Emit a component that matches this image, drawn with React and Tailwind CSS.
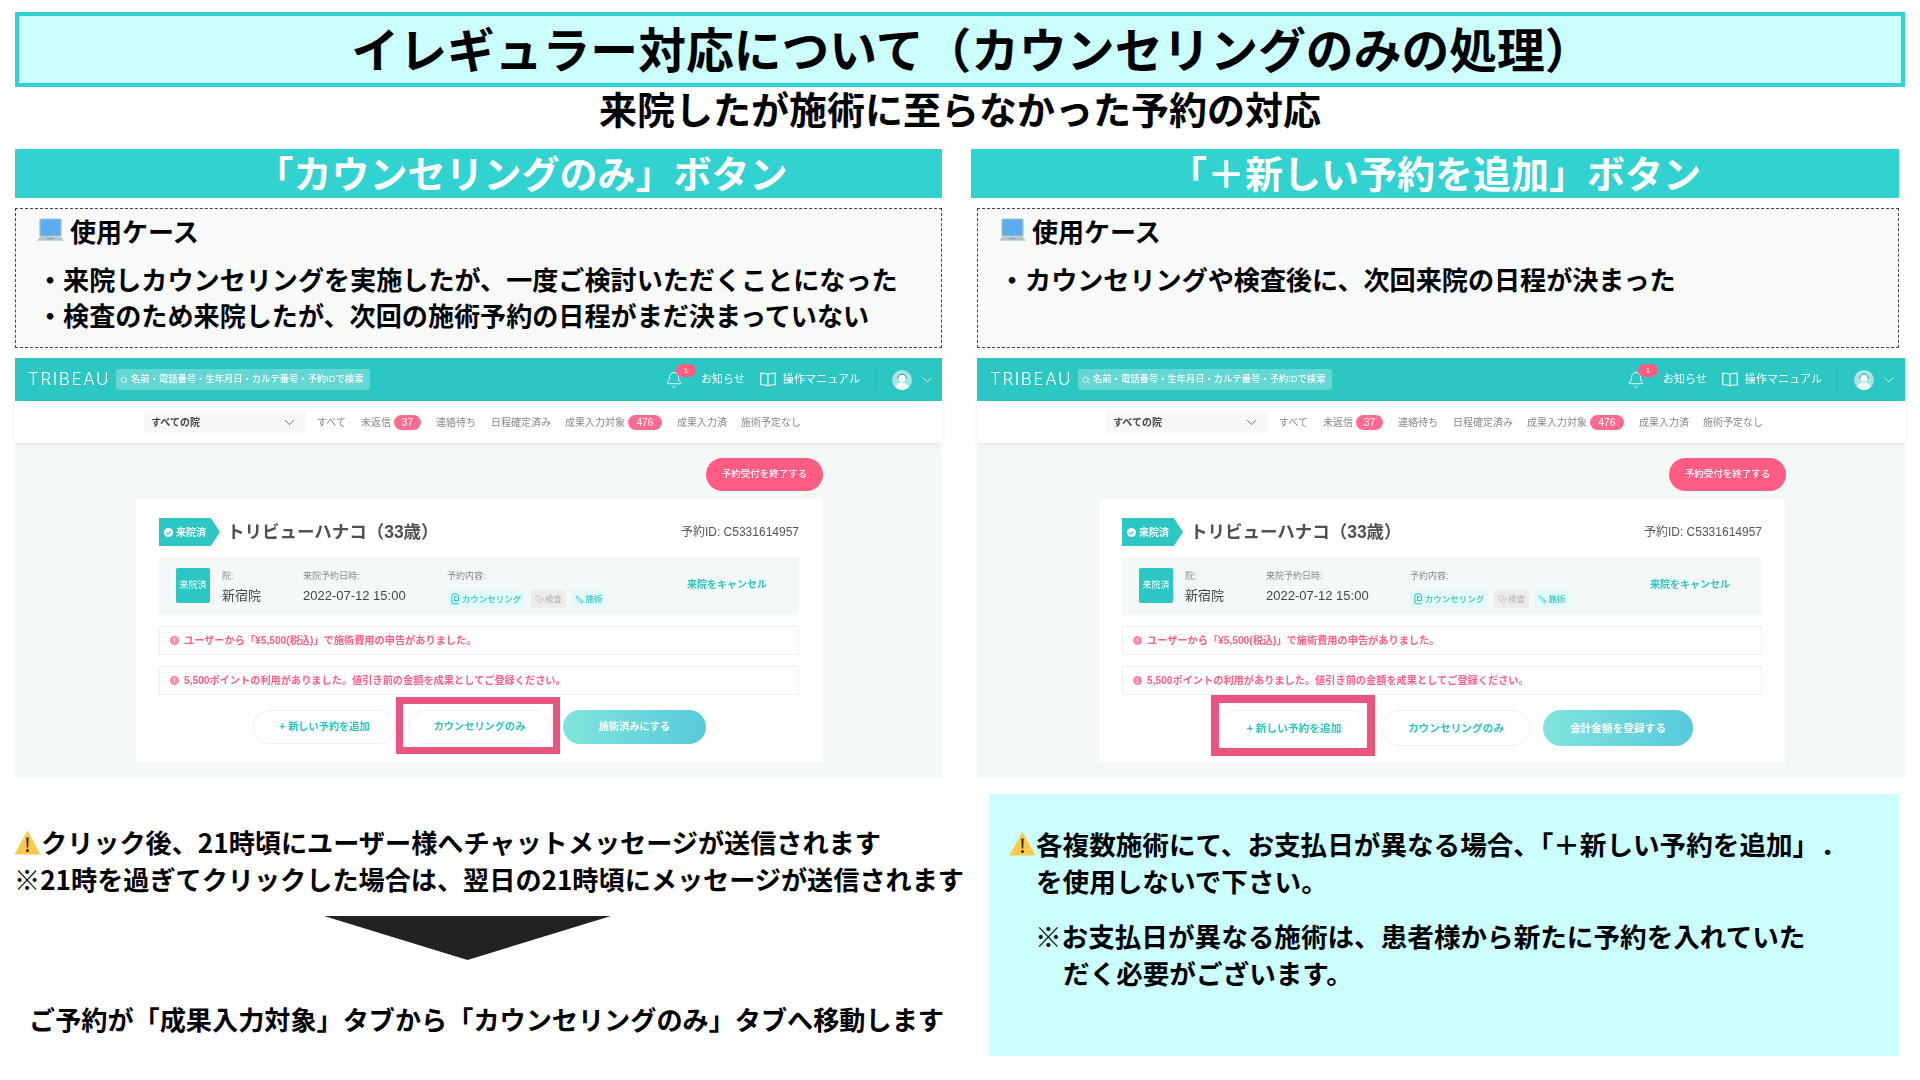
import { Bell, ChevronDown, Search, Stethoscope, Syringe } from "lucide-react";

const tabs = [
  { label: "すべて", ml: "ml-[11px]" },
  { label: "未返信", ml: "ml-[15px]", badge: "37", badgeW: "w-[27px]" },
  { label: "連絡待ち", ml: "ml-[15px]" },
  { label: "日程確定済み", ml: "ml-[15px]" },
  { label: "成果入力対象", ml: "ml-[14px]", badge: "476", badgeW: "w-[34px]" },
  { label: "成果入力済", ml: "ml-[15px]" },
  { label: "施術予定なし", ml: "ml-[14px]" },
];

function LaptopIcon() {
  return (
    <svg width="27" height="24" viewBox="0 0 27 24" className="shrink-0">
      <rect x="3" y="1" width="21" height="17" rx="1" fill="#5aaeef" stroke="#a9bcc6" strokeWidth="1.2" />
      <path d="M3 18.5h21l3 4.2H0z" fill="#b4c6cf" />
      <rect x="10" y="20" width="7" height="1.4" fill="#8fa3ad" />
    </svg>
  );
}

function WarningIcon() {
  return (
    <svg width="27" height="25" viewBox="0 0 27 25" className="shrink-0 -ml-px">
      <path d="M13.5 0.5L26.5 24.5H0.5z" fill="#ffc84d" strokeLinejoin="round" />
      <path d="M12.3 7.5h2.4l-.5 10h-1.4z" fill="#2b2b2b" />
      <circle cx="13.5" cy="20.4" r="1.5" fill="#2b2b2b" />
    </svg>
  );
}

function BookIcon() {
  return (
    <svg width="16" height="15" viewBox="0 0 16 15" fill="none" stroke="#fff" strokeWidth="1.1" className="shrink-0">
      <path d="M8 2.5C6.5 1.2 3.5 1 .8 1v11.7c2.7 0 5.7.2 7.2 1.3 1.5-1.1 4.5-1.3 7.2-1.3V1C12.5 1 9.5 1.2 8 2.5zM8 2.5V14" />
    </svg>
  );
}

function Avatar() {
  return (
    <svg width="20" height="20" viewBox="0 0 20 20" className="shrink-0">
      <circle cx="10" cy="10" r="10" fill="#a5e6e3" />
      <circle cx="10" cy="8" r="3.6" fill="#fff" />
      <path d="M3.4 17.5c.8-3.6 3.4-5 6.6-5s5.8 1.4 6.6 5A10 10 0 0 1 3.4 17.5z" fill="#fff" />
      <path d="M5.8 8.5a4.2 4.2 0 0 1 8.4 0" fill="none" stroke="#35706f" strokeWidth="0.8" />
    </svg>
  );
}

function CheckDot() {
  return (
    <svg width="9" height="9" viewBox="0 0 9 9" className="shrink-0">
      <circle cx="4.5" cy="4.5" r="4.5" fill="#fff" />
      <path d="M2.4 4.6l1.5 1.5 2.8-3" fill="none" stroke="#2cc6c3" strokeWidth="1.1" />
    </svg>
  );
}

function CounselIcon() {
  return (
    <svg width="9" height="12" viewBox="0 0 9 12" fill="none" stroke="#2cc6c3" strokeWidth="1.1" className="shrink-0">
      <path d="M8 10.8H3.2A2.4 2.4 0 0 1 .8 8.4V3.4A2.6 2.6 0 0 1 3.4.8h1.4a2.6 2.6 0 0 1 2.6 2.6v4.2H3.6V3.6h2" />
    </svg>
  );
}

function AlertBox({ children }) {
  return (
    <div className="mt-[11px] h-[29px] flex items-center pl-[10px] bg-white border border-[#eeeeee] rounded-[2px] text-[10.2px] font-bold text-[#ff6088]">
      <span className="w-[9px] h-[9px] rounded-full bg-[#ff8aa6] shrink-0 flex items-center justify-center text-[7px] leading-none text-white">!</span>
      <span className="ml-[5px]">{children}</span>
    </div>
  );
}

function AppShot({ third, highlight, cardMargin, buttonRow, buttonW, buttonH, buttonText }) {
  return (
    <div className="relative h-[420px] flex flex-col bg-[#f5f8f8] blur-[0.3px] font-['Liberation_Sans','Noto_Sans_CJK_JP',sans-serif]">
      <div className="h-[43px] shrink-0 flex items-center bg-[#2cc6c3] text-white">
        <span className="ml-[13px] w-[88px] text-[17px] tracking-[1.6px] font-['Inter',sans-serif] font-light">TRIBEAU</span>
        <div className="h-[21px] w-[254px] flex items-center pl-[4px] bg-[#64d6d3] rounded-[3px] text-[9.3px] font-medium">
          <Search size={8} className="shrink-0" />
          <span className="ml-[3px] whitespace-nowrap">名前・電話番号・生年月日・カルテ番号・予約IDで検索</span>
        </div>
        <div className="relative ml-[295px] w-[18px] flex items-center">
          <Bell size={18} strokeWidth={1.2} />
          <span className="absolute left-[11px] top-[-7px] w-[20px] h-[13px] rounded-full bg-[#ff5c84] text-[7px] leading-[13px] text-center">1</span>
        </div>
        <span className="ml-[18px] text-[11px] whitespace-nowrap">お知らせ</span>
        <span className="ml-[15px]"><BookIcon /></span>
        <span className="ml-[7px] text-[11.1px] whitespace-nowrap">操作マニュアル</span>
        <span className="ml-[15px] w-px h-[23px] bg-[#27b5b2]" />
        <span className="ml-[16px]"><Avatar /></span>
        <ChevronDown size={16} strokeWidth={1.2} className="ml-[7px]" />
      </div>

      <div className="h-[42px] shrink-0 flex items-center pl-[129px] bg-white shadow-[0_2px_6px_rgba(0,0,0,0.06)] text-[10px] text-[#888888]">
        <div className="w-[162px] h-[22px] flex items-center justify-between pl-[7px] pr-[8px] bg-[#f7f9f9] rounded-[2px] font-bold text-[#444444]">
          すべての院
          <ChevronDown size={17} strokeWidth={1.1} />
        </div>
        {tabs.map((tab) => (
          <span key={tab.label} className={`${tab.ml} flex items-center whitespace-nowrap`}>
            {tab.label}
            {tab.badge && (
              <span className={`${tab.badgeW} ml-[3px] h-[15px] rounded-full bg-[#ff6b90] text-white text-center text-[10px] leading-[15px]`}>{tab.badge}</span>
            )}
          </span>
        ))}
      </div>

      <div className="flex justify-end pr-[119px] mt-[15px]">
        <div className="w-[117px] h-[33px] flex items-center justify-center rounded-full bg-[#ff5c84] text-white text-[9.5px] font-medium">予約受付を終了する</div>
      </div>

      <div className={`relative ${cardMargin} mt-[8px] w-[686px] h-[263px] px-[23px] pt-[19px] bg-white`}>
        <div className="h-[28px] flex items-center">
          <div className="h-[28px] w-[61px] flex items-center pl-[5px] bg-[#2cc6c3] text-white text-[10px] font-bold [clip-path:polygon(0_0,85%_0,100%_50%,85%_100%,0_100%)]">
            <CheckDot />
            <span className="ml-[3px] whitespace-nowrap">来院済</span>
          </div>
          <span className="ml-[7px] text-[17.5px] font-bold text-[#505050] whitespace-nowrap">トリビューハナコ（33歳）</span>
          <span className="ml-auto text-[12px] text-[#555555] whitespace-nowrap">予約ID: C5331614957</span>
        </div>

        <div className="mt-[11px] h-[58px] flex items-start pl-[17px] pt-[11px] bg-[#f5f8f8]">
          <div className="w-[34px] h-[35px] shrink-0 flex items-center justify-center rounded-[2px] bg-[#2cc6c3] text-white text-[9px]">来院済</div>
          <div className="ml-[12px] w-[81px] shrink-0 pt-[1px] text-[#444444]">
            <div className="text-[9px] leading-[14px] text-[#888888]">院:</div>
            <div className="mt-[3px] text-[13px] leading-[20px]">新宿院</div>
          </div>
          <div className="w-[144px] shrink-0 pt-[1px] text-[#444444]">
            <div className="text-[9px] leading-[14px] text-[#888888]">来院予約日時:</div>
            <div className="mt-[3px] text-[13px] leading-[20px]">2022-07-12 15:00</div>
          </div>
          <div className="shrink-0 pt-[1px]">
            <div className="text-[9px] leading-[14px] text-[#888888]">予約内容:</div>
            <div className="mt-[7px] flex gap-[6px] text-[8.5px] font-medium">
              <span className="w-[78px] h-[18px] flex items-center justify-center gap-[2px] rounded-[2px] bg-[#e4fafa] text-[#2cc6c3] whitespace-nowrap">
                <CounselIcon />カウンセリング
              </span>
              <span className="w-[35px] h-[18px] flex items-center justify-center gap-[1px] rounded-[2px] bg-[#ececec] text-[#bbbbbb] whitespace-nowrap">
                <Stethoscope size={9} strokeWidth={1.5} />検査
              </span>
              <span className="w-[34px] h-[18px] flex items-center justify-center gap-[1px] rounded-[2px] bg-[#e4fafa] text-[#2cc6c3] whitespace-nowrap">
                <Syringe size={9} strokeWidth={2} className="rotate-90" />施術
              </span>
            </div>
          </div>
          <span className="ml-auto mr-[32px] mt-[9px] text-[10px] font-bold text-[#2cc6c3] whitespace-nowrap">来院をキャンセル</span>
        </div>

        <AlertBox>ユーザーから「¥5,500(税込)」で施術費用の申告がありました。</AlertBox>
        <AlertBox>5,500ポイントの利用がありました。値引き前の金額を成果としてご登録ください。</AlertBox>

        <div className={`${buttonRow} mt-[15px] flex font-bold ${buttonText}`}>
          <div className={`${buttonW} ${buttonH} flex items-center justify-center rounded-full bg-white border border-[#f0f0f0] text-[#2cc6c3]`}>+ 新しい予約を追加</div>
          <div className={`${buttonW} ${buttonH} flex items-center justify-center rounded-full bg-white border border-[#f0f0f0] text-[#2cc6c3]`}>カウンセリングのみ</div>
          <div className={`${buttonW} ${buttonH} flex items-center justify-center rounded-full bg-gradient-to-r from-[#82e4dd] to-[#55cadb] text-white`}>{third}</div>
        </div>

        {/* pink marker drawn over the slide */}
        <div className={`absolute ${highlight} border-[#ea5580]`} />
      </div>
    </div>
  );
}

function UseCase({ lines }) {
  return (
    <div className="mt-[10px] h-[140px] px-[21px] pt-[6px] bg-[#f8fafa] border border-dashed border-[#444444]">
      <div className="flex items-center h-[30px] text-[26px] font-bold">
        <LaptopIcon />
        <span className="ml-[6px]">使用ケース</span>
      </div>
      <div className="mt-[16px] text-[26.1px] leading-[36px] font-bold whitespace-nowrap">
        {lines.map((line) => (
          <div key={line}>{line}</div>
        ))}
      </div>
    </div>
  );
}

function SectionBar({ inset, children }) {
  return (
    <div className={`h-[49px] pb-[4px] ${inset} flex items-center justify-center bg-[#31d2d0] text-white text-[38px] leading-[45px] font-bold whitespace-nowrap`}>
      {children}
    </div>
  );
}

export default function App() {
  return (
    <div className="w-[1920px] h-[1080px] overflow-hidden bg-white px-[15px] pt-[12px] text-black font-['Noto_Sans_CJK_JP',sans-serif]">
      <div className="h-[75px] pl-[24px] pb-[4px] flex items-center justify-center border-[4px] border-[#31d2d0] bg-[#ccffff] text-[47.8px] font-bold whitespace-nowrap">
        イレギュラー対応について（カウンセリングのみの処理）
      </div>
      <div className="h-[46px] mb-[16px] pb-[4px] flex items-center justify-center text-[38px] leading-[42px] font-bold">
        来院したが施術に至らなかった予約の対応
      </div>

      <div className="flex">
        {/* left column */}
        <div className="w-[927px] shrink-0">
          <SectionBar inset="pl-[86px]">「カウンセリングのみ」ボタン</SectionBar>
          <UseCase
            lines={[
              "・来院しカウンセリングを実施したが、一度ご検討いただくことになった",
              "・検査のため来院したが、次回の施術予約の日程がまだ決まっていない",
            ]}
          />
          <div className="mt-[10px]">
            <AppShot
              third="施術済みにする"
              highlight="left-[260px] top-[198px] w-[164px] h-[57px] border-[7px]"
              cardMargin="ml-[121px]"
              buttonRow="pl-[94px] gap-[12px]"
              buttonW="w-[143px]"
              buttonH="h-[34px]"
              buttonText="text-[10.2px]"
            />
          </div>
          <div className="mt-[46px] text-[26.15px] leading-[37px] font-bold whitespace-nowrap">
            <div className="flex items-center">
              <WarningIcon />
              <span>クリック後、21時頃にユーザー様へチャットメッセージが送信されます</span>
            </div>
            <div className="-ml-px">※21時を過ぎてクリックした場合は、翌日の21時頃にメッセージが送信されます</div>
          </div>
          <svg width="287" height="44" viewBox="0 0 287 44" className="ml-[309px] mt-[18px]">
            <path d="M0 0H287L143.5 44z" fill="#222222" />
          </svg>
          <div className="mt-[41px] pl-[14px] text-[26.15px] leading-[37px] font-bold whitespace-nowrap">
            ご予約が「成果入力対象」タブから「カウンセリングのみ」タブへ移動します
          </div>
        </div>

        {/* right column */}
        <div className="ml-[29px] w-[934px] shrink-0">
          <div className="w-[928px]">
            <SectionBar inset="pl-0">「＋新しい予約を追加」ボタン</SectionBar>
          </div>
          <div className="ml-[6px] w-[922px]">
            <UseCase lines={["・カウンセリングや検査後に、次回来院の日程が決まった"]} />
          </div>
          <div className="ml-[6px] mt-[10px] w-[928px]">
            <AppShot
              third="会計金額を登録する"
              highlight="left-[112px] top-[196px] w-[164px] h-[61px] border-[8px]"
              cardMargin="ml-[122px]"
              buttonRow="pl-[97px] gap-[12px]"
              buttonW="w-[150px]"
              buttonH="h-[36px]"
              buttonText="text-[10.7px]"
            />
          </div>
          <div className="ml-[18px] mt-[16px] w-[910px] h-[262px] pt-[31px] pl-[21px] bg-[#ccffff] text-[26.6px] leading-[37px] font-bold whitespace-nowrap">
            <div className="flex items-center">
              <WarningIcon />
              <span>各複数施術にて、お支払日が異なる場合、「＋新しい予約を追加」</span>
              <span className="ml-[1px]">．</span>
            </div>
            <div className="pl-[26px]">を使用しないで下さい。</div>
            <div className="pl-[25px] mt-[18px]">※お支払日が異なる施術は、患者様から新たに予約を入れていた</div>
            <div className="pl-[53px]">だく必要がございます。</div>
          </div>
        </div>
      </div>
    </div>
  );
}
